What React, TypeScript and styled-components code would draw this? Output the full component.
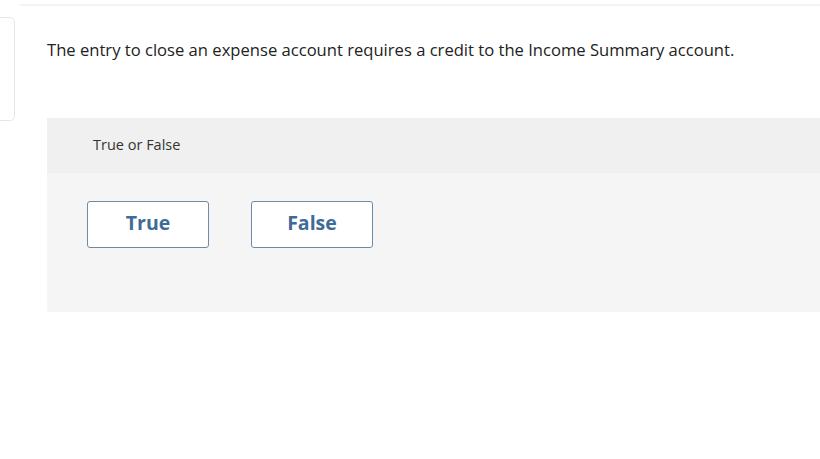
import React from "react";
import styled, { createGlobalStyle } from "styled-components";

const Global = createGlobalStyle`
  html, body { margin: 0; padding: 0; background: #fff; }
  body { font-family: "Open Sans", "Lato", sans-serif; }
  * { box-sizing: border-box; }
`;

const Page = styled.div`
  width: 820px;
  height: 459px;
  overflow: hidden;
  position: relative;
  background: #fff;
`;

const TopRule = styled.div`
  height: 6px;
  border-bottom: 2px solid #f3f3f3;
  margin-left: 20px;
`;

const Body = styled.div`
  display: flex;
  align-items: flex-start;
  padding-top: 11px;
`;

const SideCard = styled.div`
  width: 16px;
  height: 104px;
  margin-left: -1px;
  border: 1px solid #e6e6e6;
  border-left: none;
  border-radius: 0 5px 5px 0;
  flex-shrink: 0;
`;

const Main = styled.div`
  flex: 1;
  margin-left: 32px;
  display: flex;
  flex-direction: column;
`;

const Prompt = styled.p`
  margin: 22px 0 0 0;
  font-size: 16.6px;
  line-height: 22px;
  color: #222;
`;

const Panel = styled.div`
  margin-top: 57px;
  margin-right: -20px;
  background: #f5f5f5;
  border-radius: 2px 0 0 2px;
  height: 194px;
`;

const PanelHeader = styled.div`
  height: 55px;
  background: #f0f0f0;
  display: flex;
  align-items: center;
  padding: 0 0 2px 46px;
  font-size: 14.5px;
  color: #333;
`;

const Choices = styled.div`
  display: flex;
  gap: 42px;
  padding: 28px 0 0 40px;
`;

const Choice = styled.button`
  width: 122px;
  height: 47px;
  background: #fff;
  border: 1px solid #6d8aa8;
  border-radius: 3px;
  font-family: "Open Sans", "Lato", sans-serif;
  font-weight: 700;
  font-size: 19.5px;
  color: #3f6b97;
  display: flex;
  align-items: center;
  justify-content: center;
  padding: 0 0 4px 0;
  cursor: pointer;
`;

export default function App() {
  return (
    <Page>
      <Global />
      <TopRule />
      <Body>
        <SideCard />
        <Main>
          <Prompt>
            The entry to close an expense account requires a credit to the Income Summary account.
          </Prompt>
          <Panel>
            <PanelHeader>True or False</PanelHeader>
            <Choices>
              <Choice>True</Choice>
              <Choice>False</Choice>
            </Choices>
          </Panel>
        </Main>
      </Body>
    </Page>
  );
}
